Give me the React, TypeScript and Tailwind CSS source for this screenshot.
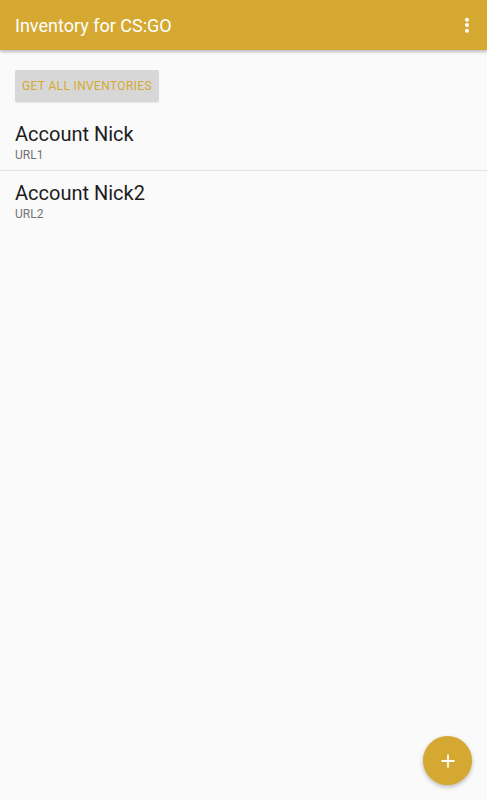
import React from "react";

export default function App() {
  return (
    <div
      className="relative w-[487px] h-[800px] bg-[#fafafa] overflow-hidden"
      style={{ fontFamily: "Roboto, 'Noto Sans', sans-serif" }}
    >
      <header className="relative z-10 h-[50px] bg-[#d5a831] flex items-start justify-between pl-[15px] pt-[16px] shadow-[0_2px_3px_rgba(0,0,0,0.25)]">
        <h1 className="text-[18px] leading-[20px] text-white font-normal">Inventory for CS:GO</h1>
        <svg width="16" height="24" viewBox="0 0 16 24" className="mr-[12px] -mt-[3px]">
          <circle cx="8" cy="6.7" r="2" fill="#fff" />
          <circle cx="8" cy="12" r="2" fill="#fff" />
          <circle cx="8" cy="17.7" r="2" fill="#fff" />
        </svg>
      </header>

      <main className="flex flex-col pt-[20px]">
        <div className="px-[15px]">
          <button className="h-[32px] w-[144px] rounded-[2px] bg-[#d7d7d7] text-[#d5a831] text-[12px] leading-[14px] tracking-[0.35px] uppercase flex items-center justify-center shadow-[0_1px_1px_rgba(0,0,0,0.08)]">
            Get all inventories
          </button>
        </div>

        <div className="mt-[9px] flex flex-col">
          <div className="pl-[15px] pt-[12px] pb-[7px] border-b border-[#e3e3e3]">
            <div className="text-[20px] leading-[23px] text-[#1d1d1d]">Account Nick</div>
            <div className="mt-[1px] text-[12px] leading-[16px] text-[#737373]">URL1</div>
          </div>
          <div className="pl-[15px] pt-[11px] pb-[7px]">
            <div className="text-[20px] leading-[23px] text-[#1d1d1d]">Account Nick2</div>
            <div className="mt-[1px] text-[12px] leading-[16px] text-[#737373]">URL2</div>
          </div>
        </div>
      </main>

      <button className="absolute right-[15px] bottom-[15px] w-[49px] h-[49px] rounded-full bg-[#d5a831] flex items-center justify-center shadow-[0_2px_4px_rgba(0,0,0,0.25)]">
        <svg width="14" height="14" viewBox="0 0 14 14">
          <path d="M7 0.5V13.5M0.5 7H13.5" stroke="#fff" strokeWidth="1.8" />
        </svg>
      </button>
    </div>
  );
}
